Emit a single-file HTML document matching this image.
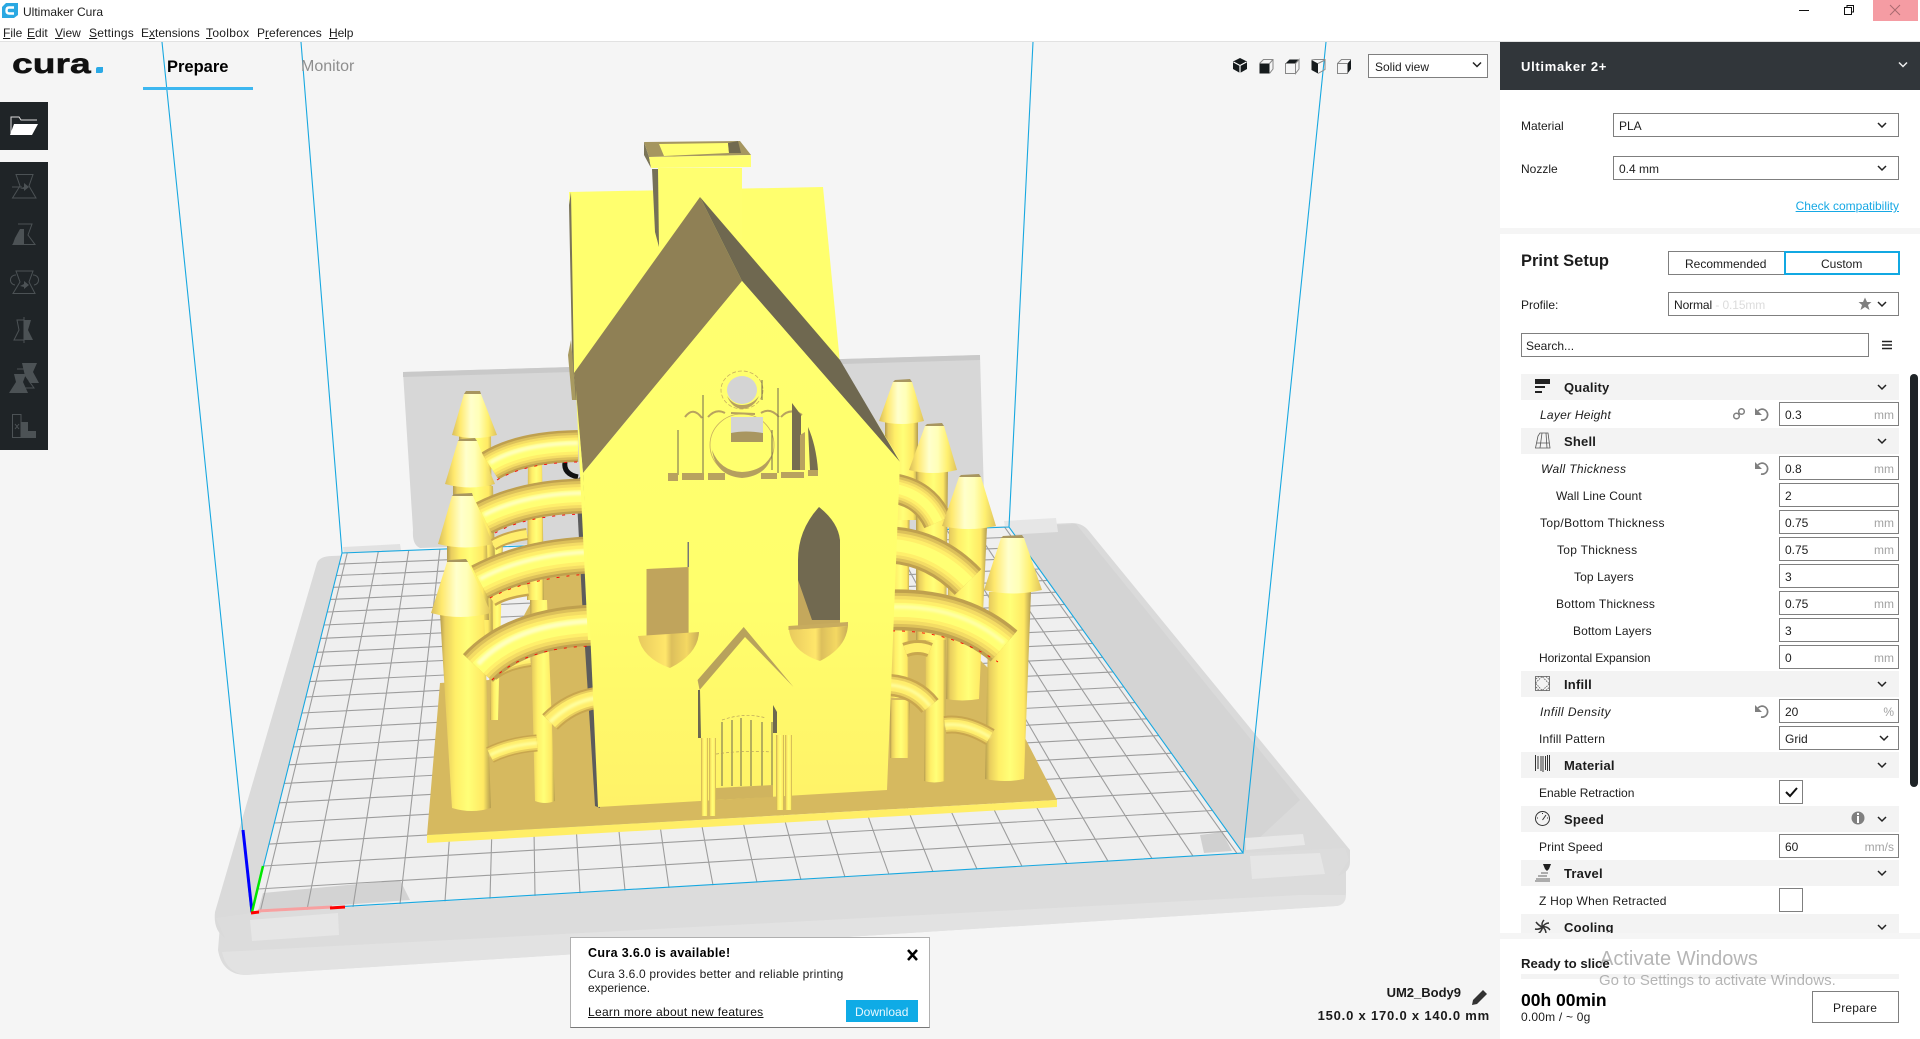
<!DOCTYPE html>
<html><head><meta charset="utf-8"><title>Ultimaker Cura</title>
<style>
html,body{margin:0;padding:0;width:1920px;height:1039px;overflow:hidden;background:#f5f5f5;font-family:"Liberation Sans",sans-serif;color:#1c1c1c;font-size:12px}
.t{position:absolute;white-space:nowrap;line-height:16px;margin-top:1px}
.b{font-weight:bold}
.c{letter-spacing:.2px}
.box{position:absolute;box-sizing:border-box;background:#fff;border:1px solid #7f7f7f}
.band{position:absolute;left:1521px;width:378px;height:26px;background:#f3f3f3}
.in{position:absolute;left:1779px;width:120px;height:24px;box-sizing:border-box;background:#fff;border:1px solid #7f7f7f}
.u{color:#a3a3a3}
svg{position:absolute;left:0;top:0}
</style></head><body>
<svg width="1920" height="1039" viewBox="0 0 1920 1039">
<defs>
<linearGradient id="body" x1="0" x2="1" y1="0" y2="0"><stop offset="0" stop-color="#b49c50"/><stop offset=".1" stop-color="#e8cd5e"/><stop offset=".3" stop-color="#ffef68"/><stop offset=".55" stop-color="#ffff78"/><stop offset=".85" stop-color="#ffe963"/><stop offset="1" stop-color="#b49c50"/></linearGradient>
<linearGradient id="cone" x1="0" x2="1" y1="0" y2="0"><stop offset="0" stop-color="#d9bd5a"/><stop offset=".18" stop-color="#ffe96e"/><stop offset=".42" stop-color="#ffffcc"/><stop offset=".6" stop-color="#ffffb8"/><stop offset=".8" stop-color="#fff070"/><stop offset="1" stop-color="#dfc25c"/></linearGradient>
<linearGradient id="front" x1="0" x2="0" y1="0" y2="1"><stop offset="0" stop-color="#ffff70"/><stop offset=".6" stop-color="#ffff6c"/><stop offset="1" stop-color="#fff268"/></linearGradient>
<linearGradient id="bowl" x1="0" x2="1" y1="0" y2="0"><stop offset="0" stop-color="#e8ca5e"/><stop offset=".45" stop-color="#ffe66a"/><stop offset=".55" stop-color="#dcbf5c"/><stop offset=".8" stop-color="#f4d862"/><stop offset="1" stop-color="#c8ac58"/></linearGradient>
<filter id="bl" x="-20%" y="-20%" width="140%" height="140%"><feGaussianBlur stdDeviation="1.2"/></filter>
<path id="a1" d="M490,466 Q520,447 578,446"/>
<path id="a2" d="M484,518 Q525,497 582,496"/>
<path id="a3" d="M480,582 Q525,558 588,555"/>
<path id="a4" d="M478,668 Q515,628 594,625"/>
<path id="b1" d="M892,488 Q925,493 938,522"/>
<path id="b2" d="M892,545 Q935,548 968,582"/>
<path id="b3" d="M890,610 Q960,608 1004,646"/>
<path id="b4" d="M890,685 Q915,687 930,706"/>
<path id="c1" d="M490,672 Q505,660 530,657"/>
<path id="c2" d="M490,755 Q510,745 537,743"/>
<path id="c3" d="M550,722 Q570,702 596,698"/>
<path id="c4" d="M945,725 Q965,722 990,737"/>
</defs>
<!-- back wall -->
<path d="M403,372 L980,355 L985,530 L420,548 Q412,545 413,530 Z" fill="#d7d7d7"/>
<path d="M403,372 L980,355 L980,360 L403,377 Z" fill="#c9c9c9"/>
<!-- plate -->
<path d="M220,925 L218,950 Q222,974 245,975 L1336,906 Q1346,905 1346,892 L1346,870 Z" fill="#dcdcdc"/>
<path d="M222,952 Q226,972 245,975 L1336,906 Q1346,905 1346,895 L1300,895 Z" fill="#e2e2e2"/>
<path d="M332,556 Q320,556 317,563 L215,912 Q213,930 225,938 L1338,876 Q1350,872 1350,862 L1350,850 L1088,530 Q1082,523 1072,523 Z" fill="#dadada"/>
<path d="M1009,527 L1076,524 L1300,800 L1243,853 Z" fill="#d4d4d4"/>
<path d="M252,913 L1243,853 L1345,848 L1349,860 L1338,876 L225,938 L216,918 Z" fill="#dcdcdc"/>
<path d="M343,547 L400,544 L402,556 L345,559 Z" fill="#e2e2e2"/>
<path d="M1004,521 L1056,518 L1058,532 L1006,535 Z" fill="#e6e6e6"/>
<path d="M1245,838 L1303,834 L1305,845 L1246,850 Z" fill="#e8e8e8"/>
<path d="M1250,856 L1320,853 L1325,874 L1252,879 Z" fill="#e6e6e6"/>
<path d="M250,920 L338,913 L339,935 L252,941 Z" fill="#e6e6e6"/>
<!-- floor -->
<path d="M252,913 L342,553 L1009,527 L1243,853 Z" fill="#efefef"/>
<path d="M263,893 L400,880 L410,900 L258,911 Z" fill="#d3d3d3"/>
<path d="M1200,835 L1222,832 L1232,851 L1204,853 Z" fill="#d0d0d0"/>
<path fill="none" stroke="#9d9d9d" stroke-width="1.1" d="M260,912.5L347.3,552.8M307,909.7L378.3,551.6M353,906.9L408.7,550.3M400,904L439.9,549.2M445,901.3L469.7,548M490,898.6L499.7,546.8M535,895.9L529.7,545.7M580,893.2L559.7,544.6M625,890.4L589.8,543.4M669,887.8L619.3,542.1M713,885.1L648.8,541M757,882.5L678.4,539.9M801,879.8L708,538.7M845,877.1L737.7,537.4M889,874.5L767.5,536.4M933,871.8L797.3,535.2M977,869.1L827.1,533.9M1022,866.4L857.8,532.9M1067,863.7L888.4,531.6M1108,861.2L916.3,530.6M1152,858.5L946.6,529.6M1193,856.1L974.6,528.4M1237,853.4L1004.7,527.2
M258,889L1227.4,831.3M263.7,866L1212.5,810.5M269.2,844.1L1198.2,790.6M274.5,823L1184.5,771.5M279.5,802.8L1171.4,753.2M284.4,783.4L1158.8,735.6M289.1,764.8L1146.6,718.8M293.5,746.9L1135,702.6M297.8,729.6L1123.8,687M302,713L1113,671.9M306,697L1102.6,657.4M309.9,681.6L1092.6,643.4M313.6,666.7L1082.9,630M317.2,652.3L1073.6,617M320.6,638.4L1064.5,604.4M324,625L1055.8,592.2M327.2,612L1047.4,580.4M330.4,599.4L1039.2,569M333.4,587.3L1031.3,558M336.4,575.5L1023.6,547.4M339.2,564.1L1016.2,537"/>
<!-- build volume -->
<path fill="none" stroke="#18a8e0" stroke-width="1.1" d="M162,42L251,912L1243,853L1009,527L342,553L252,912M301,42L342,553M1033,42L1009,527M1326,42L1243,853"/>
<path d="M252,912 L243,830" stroke="#0000ff" stroke-width="3" fill="none"/>
<path d="M252,912 L263,866" stroke="#00e800" stroke-width="2.5" fill="none"/>
<path d="M258,911 L332,907" stroke="#f7a0a0" stroke-width="3" fill="none"/>
<path d="M251,913 L259,912 M330,908 L345,907" stroke="#ff0000" stroke-width="3" fill="none"/>

<!-- model base -->
<path d="M427,835 L1057,800 L990,670 L945,625 L890,620 L590,570 L547,573 L489,680 L440,683 Z" fill="#d6b95f"/>
<path d="M427,835 L1057,800 L1057,807 L427,843 Z" fill="#ffee66"/>
<path d="M565,462 Q563,474 578,477" fill="none" stroke="#111" stroke-width="5"/>
<!-- dark side strip -->
<path d="M576,480 L590,470 L600,808 L595,806 L582,600 Z" fill="#5c5c5c"/>

<!-- poles -->
<path d="M927,540 L946,540 L945,781 Q934,784 924,781 Z" fill="url(#body)"/>
<path d="M889,470 L910,470 L908,698 L890,698 Z" fill="url(#body)"/>
<path d="M528,460 L542,460 L544,600 L527,600 Z" fill="url(#body)"/>
<path d="M530,600 L547,600 L555,801 Q545,805 535,801 Z" fill="url(#body)"/>
<path d="M493,540 L503,540 L498,720 L490,720 Z" fill="url(#body)"/>
<path d="M900,700 L910,700 L908,758 L890,758 L890,700 Z" fill="url(#body)"/>

<!-- tower bodies left -->
<path d="M459,436 L491,436 L493,650 L459,650 Z" fill="url(#body)"/>
<path d="M453,486 L493,486 L495,560 L453,560 Z" fill="url(#body)"/>
<path d="M447,545 L487,545 L489,620 L447,620 Z" fill="url(#body)"/>
<path d="M440,614 L484,614 L491,808 Q472,814 452,808 Z" fill="url(#body)"/>
<!-- tower bodies right -->
<path d="M885,422 L918,422 L918,520 L885,520 Z" fill="url(#body)"/>
<path d="M916,470 L948,470 L946,640 L916,640 Z" fill="url(#body)"/>
<path d="M949,527 L987,527 L979,699 Q962,702 946,699 Z" fill="url(#body)"/>
<path d="M989,592 L1031,592 L1024,779 Q1005,783 985,779 Z" fill="url(#body)"/>

<!-- arcs -->
<g fill="none">
<path d="M492,600 Q505,592 528,589" stroke="#c8a64e" stroke-width="14"/><path d="M492,600 Q505,592 528,589" stroke="#ffee6c" stroke-width="9"/>
<path d="M493,545 Q506,537 527,534" stroke="#c8a64e" stroke-width="12"/><path d="M493,545 Q506,537 527,534" stroke="#ffee6c" stroke-width="8"/>
<path d="M905,650 Q918,645 930,650" stroke="#c8a64e" stroke-width="15"/><path d="M905,650 Q918,645 930,650" stroke="#ffee6c" stroke-width="9"/>

<use href="#c1" stroke="#c8a64e" stroke-width="20"/><use href="#c1" stroke="#e8cd5e" stroke-width="16"/><use href="#c1" stroke="#ffee6c" stroke-width="12"/><use href="#c1" stroke="#ffffa0" stroke-width="4" filter="url(#bl)"/>
<use href="#c2" stroke="#c8a64e" stroke-width="17"/><use href="#c2" stroke="#e8cd5e" stroke-width="14"/><use href="#c2" stroke="#ffee6c" stroke-width="10"/><use href="#c2" stroke="#ffffa0" stroke-width="3" filter="url(#bl)"/>
<use href="#c3" stroke="#c8a64e" stroke-width="22"/><use href="#c3" stroke="#e8cd5e" stroke-width="18"/><use href="#c3" stroke="#ffee6c" stroke-width="14"/><use href="#c3" stroke="#ffffa0" stroke-width="4" filter="url(#bl)"/>
<use href="#c4" stroke="#c8a64e" stroke-width="18"/><use href="#c4" stroke="#e8cd5e" stroke-width="14"/><use href="#c4" stroke="#ffee6c" stroke-width="10"/><use href="#c4" stroke="#ffffa0" stroke-width="3" filter="url(#bl)"/>
<use href="#b4" stroke="#c8a64e" stroke-width="22"/><use href="#b4" stroke="#e8cd5e" stroke-width="17"/><use href="#b4" stroke="#ffee6c" stroke-width="12"/><use href="#b4" stroke="#ffffa0" stroke-width="3" filter="url(#bl)"/>

<use href="#a1" stroke="#bfa04e" stroke-width="32"/><use href="#a1" stroke="#dcc05a" stroke-width="27"/><use href="#a1" stroke="#f4dc64" stroke-width="22"/><use href="#a1" stroke="#ffef6a" stroke-width="17"/><use href="#a1" stroke="#ffff74" stroke-width="11"/><use href="#a1" y="-3" stroke="#ffffc0" stroke-width="4" filter="url(#bl)"/>
<use href="#a2" stroke="#bfa04e" stroke-width="35"/><use href="#a2" stroke="#dcc05a" stroke-width="30"/><use href="#a2" stroke="#f4dc64" stroke-width="24"/><use href="#a2" stroke="#ffef6a" stroke-width="18"/><use href="#a2" stroke="#ffff74" stroke-width="12"/><use href="#a2" y="-3" stroke="#ffffc0" stroke-width="4" filter="url(#bl)"/>
<use href="#a3" stroke="#bfa04e" stroke-width="37"/><use href="#a3" stroke="#dcc05a" stroke-width="32"/><use href="#a3" stroke="#f4dc64" stroke-width="26"/><use href="#a3" stroke="#ffef6a" stroke-width="20"/><use href="#a3" stroke="#ffff74" stroke-width="13"/><use href="#a3" y="-3" stroke="#ffffc0" stroke-width="4" filter="url(#bl)"/>
<use href="#a4" stroke="#bfa04e" stroke-width="41"/><use href="#a4" stroke="#dcc05a" stroke-width="35"/><use href="#a4" stroke="#f4dc64" stroke-width="29"/><use href="#a4" stroke="#ffef6a" stroke-width="22"/><use href="#a4" stroke="#ffff74" stroke-width="15"/><use href="#a4" y="-4" stroke="#ffffc0" stroke-width="5" filter="url(#bl)"/>
<path stroke="#ff0000" stroke-width=".9" stroke-dasharray="3 7" d="M497,480 Q525,463 577,462M495,533 Q525,516 582,514M490,598 Q525,579 588,574M492,680 Q525,647 594,646"/>

<use href="#b1" stroke="#bfa04e" stroke-width="30"/><use href="#b1" stroke="#dcc05a" stroke-width="25"/><use href="#b1" stroke="#f4dc64" stroke-width="20"/><use href="#b1" stroke="#ffef6a" stroke-width="15"/><use href="#b1" stroke="#ffff74" stroke-width="9"/>
<use href="#b2" stroke="#bfa04e" stroke-width="37"/><use href="#b2" stroke="#dcc05a" stroke-width="31"/><use href="#b2" stroke="#f4dc64" stroke-width="25"/><use href="#b2" stroke="#ffef6a" stroke-width="19"/><use href="#b2" stroke="#ffff74" stroke-width="12"/>
<use href="#b3" stroke="#bfa04e" stroke-width="41"/><use href="#b3" stroke="#dcc05a" stroke-width="34"/><use href="#b3" stroke="#f4dc64" stroke-width="28"/><use href="#b3" stroke="#ffef6a" stroke-width="21"/><use href="#b3" stroke="#ffff74" stroke-width="14"/><use href="#b3" y="-3" stroke="#ffffa8" stroke-width="4" filter="url(#bl)"/>
<path stroke="#ff0000" stroke-width=".9" stroke-dasharray="3 7" d="M892,631 Q950,630 998,662"/>
</g>

<!-- cones left -->
<path d="M464,394 L452,435 Q475,441 497,435 L481,394 Z" fill="url(#cone)"/><path d="M464,394 L481,394 L480,391 L466,391Z" fill="#a8965f"/>
<path d="M458,441 L445,484 Q470,491 495,484 L477,441 Z" fill="url(#cone)"/><path d="M458,441 L477,441 L475,438 L460,439Z" fill="#a8965f"/>
<path d="M452,496 L438,544 Q465,551 493,544 L473,496 Z" fill="url(#cone)"/><path d="M452,496 L473,496 L472,493 L454,494Z" fill="#a8965f"/>
<path d="M447,562 L431,613 Q460,621 491,613 L468,562 Z" fill="url(#cone)"/><path d="M447,562 L468,562 L466,559 L449,560Z" fill="#a8965f"/>
<!-- cones right -->
<path d="M893,382 L879,421 Q901,427 924,421 L912,382 Z" fill="url(#cone)"/><path d="M893,382 L912,382 L910,379 L895,380Z" fill="#a8965f"/>
<path d="M925,426 L909,470 Q932,476 957,470 L944,426 Z" fill="url(#cone)"/><path d="M925,426 L944,426 L942,423 L927,424Z" fill="#a8965f"/>
<path d="M959,477 L942,526 Q968,532 996,526 L981,477 Z" fill="url(#cone)"/><path d="M959,477 L981,477 L979,474 L961,475Z" fill="#a8965f"/>
<path d="M1001,538 L984,590 Q1012,597 1042,590 L1024,538 Z" fill="url(#cone)"/><path d="M1001,538 L1024,538 L1022,535 L1003,536Z" fill="#a8965f"/>

<!-- house -->
<path d="M569,192 L823,187 L840,363 L900,460 L574,380 Z" fill="#ffff6e"/>
<path d="M569,205 L571,192 L574,373 L577,400 L573,400 Z" fill="#7a7458"/>
<path d="M568,355 L571,340 L576,400 L572,400 Z" fill="#a89a60"/>
<!-- chimney -->
<path d="M658,168 L742,168 L742,250 L658,250 Z" fill="#ffff70"/>
<path d="M652,169 L658,169 L659,247 L655,232 Z" fill="#757058"/>
<path d="M644,142 L649,157 L651,168 L644,155 Z" fill="#7a7458"/>
<path d="M644,142 L740,141 L751,155 L649,157 Z" fill="#a59660"/>
<path d="M659,144 L728,143 L729,153 L664,156 Z" fill="#ffff70"/>
<path d="M728,143 L738,141 L741,153 L729,153 Z" fill="#726a50"/>
<path d="M649,157 L751,155 L751,167 L651,168 Z" fill="#ffff72"/>
<!-- roof -->
<path d="M700,197 L742,281 L583,473 L574,373 Z" fill="#8f8055"/>
<path d="M700,197 L742,281 L900,462 L840,360 Z" fill="#6f6850"/>
<path d="M576,390 L583,473 L592,640 L588,640 Z" fill="#ffff6e"/>
<!-- front -->
<path d="M583,473 L742,281 L900,462 L887,790 L598,807 Z" fill="url(#front)"/>

<!-- upper windows -->
<ellipse cx="742" cy="390" rx="21" ry="19" fill="none" stroke="#c8b060" stroke-width=".8" stroke-dasharray="4 2"/>
<ellipse cx="742" cy="390" rx="15" ry="14" fill="#d4d4d4"/>
<path d="M727,396 Q732,408 742,409 Q754,408 759,396 Q752,405 742,405 Q733,405 727,396Z" fill="#b8a25f"/>
<ellipse cx="742" cy="445" rx="32" ry="31" fill="none" stroke="#c8b060" stroke-width=".8"/>
<path d="M712,450 Q716,476 742,478 Q768,476 773,452 Q765,471 742,472 Q720,471 712,450Z" fill="#b59f5f"/>
<rect x="731" y="417" width="32" height="25" fill="#d4d4d4"/>
<path d="M731,433 Q745,430 763,433 L763,442 L731,442 Z" fill="#a99660"/>
<path fill="none" stroke="#b8a25f" stroke-width="2" d="M685,417 Q693,406 702,418M708,417 Q716,408 725,413M731,413 L755,414M761,413 Q770,407 779,417M781,417 Q790,407 802,415"/>
<path fill="none" stroke="#726a50" stroke-width="1" d="M703,395V473M678,430V475M778,388V473M762,380V400M772,430V470"/>
<path d="M792,403 L801,415 L801,470 L792,470Z" fill="#766c50"/>
<path d="M808,427 Q816,445 818,470 L810,470 Z" fill="#766c50"/>
<path d="M800,435 L805,432 L805,470 L800,470Z" fill="#b8a25f"/>
<path fill="#b8a25f" d="M668,473H678V481H668ZM682,473H704V480H682ZM708,473H725V480H708ZM761,473H777V479H761ZM781,472H804V478H781ZM808,470H818V476H808Z"/>

<!-- big windows -->
<path d="M819,507 Q798,530 798,560 L798,630 L840,630 L840,540 Q838,522 819,507Z" fill="#716950"/>
<path d="M798,580 L812,620 L840,620 L840,630 L798,630 Z" fill="#c4a85c"/>
<path d="M646.5,569 L688.6,567 L688.6,634 L646.5,636 Z" fill="#c0a45c"/>
<path d="M687.5,542 L689,542 L689,567 L687.5,567Z" fill="#777"/>
<!-- shields -->
<path d="M638,636 L699,632 Q698,654 670,668 Q642,658 638,636 Z" fill="url(#bowl)"/>
<path d="M789,630 L848,626 Q846,648 820,661 Q792,652 789,630 Z" fill="url(#bowl)"/>
<path d="M788.500,630 L848,626 L848,622 L788.500,626Z" fill="#c8ac5e"/>
<!-- door gable -->
<path d="M743.7,627 L793.5,687 L745,637 L699.6,690 L697.6,680 Z" fill="#b8a25c"/>
<path d="M698,690 L700,690 L701,738 L698,738 Z" fill="#6c6850"/>
<path d="M773,705 L777,712 L777,733 L773,733 Z" fill="#6c6850"/>
<path fill="none" stroke="#6c6850" stroke-width="1" d="M722,722V786M732,720V786M741,718V786M751,720V786M762,722V786M772,722V786"/>
<path fill="none" stroke="#b8a25c" stroke-width=".7" stroke-dasharray="3 2" d="M716,754 Q745,750 772,752M722,720 Q745,712 766,718"/>
<path d="M716,788 L773,785 L773,797 L716,800 Z" fill="#d0b45e"/>
<rect x="701" y="738" width="7" height="78" fill="url(#body)"/><rect x="709" y="738" width="7" height="78" fill="url(#body)"/>
<rect x="776" y="735" width="8" height="75" fill="url(#body)"/><rect x="785" y="735" width="7" height="75" fill="url(#body)"/>
</svg>

<!-- title bar -->
<div style="position:absolute;left:0;top:0;width:1920px;height:41px;background:#fff"></div>
<div style="position:absolute;left:0;top:41px;width:1920px;height:1px;background:#e2e2e2"></div>
<div class="t" style="left:23px;top:3px;font-size:12px">Ultimaker Cura</div>
<div class="t" style="left:3px;top:24px"><u>F</u>ile</div>
<div class="t" style="left:27px;top:24px"><u>E</u>dit</div>
<div class="t" style="left:55px;top:24px"><u>V</u>iew</div>
<div class="t" style="left:89px;top:24px;letter-spacing:.2px"><u>S</u>ettings</div>
<div class="t" style="left:141px;top:24px">E<u>x</u>tensions</div>
<div class="t" style="left:206px;top:24px;letter-spacing:.3px"><u>T</u>oolbox</div>
<div class="t" style="left:257px;top:24px">P<u>r</u>eferences</div>
<div class="t" style="left:329px;top:24px;letter-spacing:-.1px"><u>H</u>elp</div>
<div style="position:absolute;left:1873px;top:0;width:45px;height:21px;background:#f59ca3"></div>

<!-- header -->
<div class="t b" style="left:12px;top:47px;font-size:28px;line-height:32px;color:#111;transform:scaleX(1.33);transform-origin:left center;-webkit-text-stroke:.5px #111">cura</div>
<div style="position:absolute;left:96px;top:67px;width:7px;height:6px;background:#2aa9e6;border-radius:2px 0 2px 0"></div>
<div class="t b" style="left:167px;top:58px;font-size:16.5px;color:#000">Prepare</div>
<div style="position:absolute;left:143px;top:87px;width:110px;height:3px;background:#3db7f0"></div>
<div class="t" style="left:301px;top:58px;font-size:16px;color:#8e8e8e">Monitor</div>
<div style="position:absolute;left:0;top:102px;width:48px;height:48px;background:#1f2427"></div>
<div style="position:absolute;left:0;top:162px;width:48px;height:288px;background:#1f2427"></div>
<div class="box" style="left:1368px;top:54px;width:120px;height:24px"></div>
<div class="t" style="left:1375px;top:58px">Solid view</div>

<!-- sidebar -->
<div style="position:absolute;left:1500px;top:42px;width:420px;height:997px;background:#fff"></div>
<div style="position:absolute;left:1500px;top:42px;width:420px;height:48px;background:#31363a"></div>
<div class="t b" style="left:1521px;top:58px;font-size:13px;color:#fff;letter-spacing:.7px">Ultimaker 2+</div>
<div class="t" style="left:1521px;top:117px">Material</div>
<div class="box" style="left:1613px;top:113px;width:286px;height:24px"></div>
<div class="t" style="left:1619px;top:117px">PLA</div>
<div class="t" style="left:1521px;top:160px">Nozzle</div>
<div class="box" style="left:1613px;top:156px;width:286px;height:24px"></div>
<div class="t" style="left:1619px;top:160px">0.4 mm</div>
<div class="t" style="right:21px;top:197px;color:#16a8e4;text-decoration:underline">Check compatibility</div>
<div style="position:absolute;left:1500px;top:228px;width:420px;height:6px;background:#f5f5f5"></div>
<div class="t b" style="left:1521px;top:252px;font-size:16.5px">Print Setup</div>
<div class="box" style="left:1668px;top:251px;width:117px;height:24px"></div>
<div class="t" style="left:1685px;top:255px">Recommended</div>
<div class="box" style="left:1784px;top:251px;width:116px;height:24px;border:2px solid #11a8e2"></div>
<div class="t" style="left:1821px;top:255px">Custom</div>
<div class="t" style="left:1521px;top:296px">Profile:</div>
<div class="box" style="left:1668px;top:292px;width:231px;height:24px"></div>
<div class="t" style="left:1674px;top:296px;letter-spacing:-.1px">Normal <span style="color:#dcdcdc">- 0.15mm</span></div>
<div class="box" style="left:1521px;top:333px;width:348px;height:24px"></div>
<div class="t" style="left:1526px;top:337px">Search...</div>
<div style="position:absolute;left:1910px;top:374px;width:8px;height:413px;background:#1f2427;border-radius:4px"></div>

<!-- settings -->
<div class="band" style="top:374px"></div><div class="t b c" style="left:1564px;top:379px;font-size:13px">Quality</div>
<div class="t" style="left:1540px;top:406px;font-style:italic;letter-spacing:.25px">Layer Height</div>
<div class="in" style="top:402px"></div><div class="t" style="left:1785px;top:406px">0.3</div><div class="t u" style="right:26px;top:406px">mm</div>
<div class="band" style="top:428px"></div><div class="t b c" style="left:1564px;top:433px;font-size:13px">Shell</div>
<div class="t" style="left:1541px;top:460px;font-style:italic;letter-spacing:.35px">Wall Thickness</div>
<div class="in" style="top:456px"></div><div class="t" style="left:1785px;top:460px">0.8</div><div class="t u" style="right:26px;top:460px">mm</div>
<div class="t" style="left:1556px;top:487px;letter-spacing:.1px">Wall Line Count</div>
<div class="in" style="top:483px"></div><div class="t" style="left:1785px;top:487px">2</div>
<div class="t" style="left:1540px;top:514px;letter-spacing:.35px">Top/Bottom Thickness</div>
<div class="in" style="top:510px"></div><div class="t" style="left:1785px;top:514px">0.75</div><div class="t u" style="right:26px;top:514px">mm</div>
<div class="t" style="left:1557px;top:541px;letter-spacing:.3px">Top Thickness</div>
<div class="in" style="top:537px"></div><div class="t" style="left:1785px;top:541px">0.75</div><div class="t u" style="right:26px;top:541px">mm</div>
<div class="t" style="left:1574px;top:568px;letter-spacing:.1px">Top Layers</div>
<div class="in" style="top:564px"></div><div class="t" style="left:1785px;top:568px">3</div>
<div class="t" style="left:1556px;top:595px;letter-spacing:.25px">Bottom Thickness</div>
<div class="in" style="top:591px"></div><div class="t" style="left:1785px;top:595px">0.75</div><div class="t u" style="right:26px;top:595px">mm</div>
<div class="t" style="left:1573px;top:622px;letter-spacing:.1px">Bottom Layers</div>
<div class="in" style="top:618px"></div><div class="t" style="left:1785px;top:622px">3</div>
<div class="t" style="left:1539px;top:649px;letter-spacing:-.1px">Horizontal Expansion</div>
<div class="in" style="top:645px"></div><div class="t" style="left:1785px;top:649px">0</div><div class="t u" style="right:26px;top:649px">mm</div>
<div class="band" style="top:671px"></div><div class="t b c" style="left:1564px;top:676px;font-size:13px">Infill</div>
<div class="t" style="left:1540px;top:703px;font-style:italic;letter-spacing:.45px">Infill Density</div>
<div class="in" style="top:699px"></div><div class="t" style="left:1785px;top:703px">20</div><div class="t u" style="right:26px;top:703px">%</div>
<div class="t" style="left:1539px;top:730px;letter-spacing:.2px">Infill Pattern</div>
<div class="in" style="top:726px"></div><div class="t" style="left:1785px;top:730px">Grid</div>
<div class="band" style="top:752px"></div><div class="t b c" style="left:1564px;top:757px;font-size:13px">Material</div>
<div class="t" style="left:1539px;top:784px">Enable Retraction</div>
<div class="in" style="top:780px;width:24px"></div>
<div class="band" style="top:806px"></div><div class="t b c" style="left:1564px;top:811px;font-size:13px">Speed</div>
<div class="t" style="left:1539px;top:838px;letter-spacing:.1px">Print Speed</div>
<div class="in" style="top:834px"></div><div class="t" style="left:1785px;top:838px">60</div><div class="t u" style="right:26px;top:838px">mm/s</div>
<div class="band" style="top:860px"></div><div class="t b c" style="left:1564px;top:865px;font-size:13px">Travel</div>
<div class="t" style="left:1539px;top:892px;letter-spacing:.25px">Z Hop When Retracted</div>
<div class="in" style="top:888px;width:24px"></div>
<div class="band" style="top:914px"></div><div class="t b c" style="left:1564px;top:919px;font-size:13px">Cooling</div>

<!-- icons layer -->
<svg width="1920" height="1039" viewBox="0 0 1920 1039">
<!-- app icon -->
<path d="M2,7 L6,3 H18 V15 L14,18 H2 Z" fill="#2aa8e2"/>
<path d="M14,7.5 H9 Q6.5,7.5 6.5,10.5 Q6.5,13.5 9,13.5 H14" fill="none" stroke="#fff" stroke-width="2.4"/>
<!-- window buttons -->
<path d="M1799,10.5H1809" stroke="#111" stroke-width="1"/>
<path d="M1844.5,7.5H1851.5V14.5H1844.5ZM1847,7.5V5.5H1853.5V12H1851.5" fill="none" stroke="#111" stroke-width="1"/>
<path d="M1890,5L1900,15M1900,5L1890,15" stroke="#a96a70" stroke-width="1" fill="none"/>
<!-- open -->
<path d="M11,135 V117 H19 L21,120 H37" fill="none" stroke="#ddd" stroke-width="1"/>
<path d="M14,124 H38 L32,135 H10 Z" fill="#fff"/>
<!-- tools -->
<g fill="none" stroke="#4c5255" stroke-width="1">
<path d="M16,174.5H33L29,186L36,198H12.5L20,186Z"/><path d="M12,187H22"/>
<path d="M18,224H32L28,235L35,244.5H13L22,233"/>
<path d="M16,271H33L29,282L35,293.5H13L20,282Z"/><path d="M16,275a5,5 0 1,0 -1,10M33,275a5,5 0 1,1 1,10"/>
<path d="M24,317V343"/><path d="M17,320H24V340H14L19,330Z"/>
<path d="M17,369H31L29,381L34,388H19"/>
<path d="M12.5,414.5H21V437.5H12.5Z"/>
</g>
<g fill="#4c5255">
<path d="M20,229H24V245H12.5L15,238Z"/><path d="M20,188.500L24,187V183L29,187L24,191V189Z"/><path d="M20,286L24,284V281L29,285L24,289V287Z"/>
<path d="M24,320H31L28,330L33,340H24Z"/>
<path d="M22,363H37L33,372L39,383H30L25,376Z"/><path d="M14,374H26L23,382L28,393H9L16,382Z"/>
<path d="M21,422H28V431H36V438H21Z"/>
</g>
<path d="M15,424l4,5m0,-5l-4,5" stroke="#4c5255" stroke-width="1"/>
<!-- view cubes -->
<path d="M1240,58L1247,61.500V69L1240,73L1233,69V61.500Z" fill="#151a1c"/><path d="M1233.500,62L1240,65.500L1246.500,62M1240,65.500V73" stroke="#fff" stroke-width="1.2" fill="none"/>
<g transform="translate(1259,59)"><path d="M0.500,4.500H10.500V14.500H0.500Z" fill="#161b1d"/><path d="M0.500,4.500L4.500,.5H14V10L10.500,14.500" fill="none" stroke="#888"/><path d="M10.500,4.500L14,.5" stroke="#888"/></g>
<g transform="translate(1285,59)"><path d="M0.500,4.500L4.500,.5H14L10.500,4.500Z" fill="#161b1d"/><path d="M10.500,4.500L14,.5V10L10.500,14.500ZM0.500,4.500H10.500V14.500H0.500Z" fill="none" stroke="#888"/></g>
<g transform="translate(1311,59)"><path d="M0.500,1L7,4.500V14.500L.5,11Z" fill="#161b1d"/><path d="M0.500,1L4,.5H14V10.500L7,14.500M7,4.500L14,1" fill="none" stroke="#888"/></g>
<g transform="translate(1337,59)"><path d="M10.500,4.500L14,.5V10L10.500,14.500Z" fill="#161b1d"/><path d="M0.500,4.500H10.500V14.500H0.500ZM0.500,4.500L4.500,.5H14" fill="none" stroke="#888"/></g>
<!-- chevrons -->
<path d="M1473,62.500L1477,66.500L1481,62.500" fill="none" stroke="#222" stroke-width="1.500"/>
<path d="M1899,62.500L1903,66.500L1907,62.500" fill="none" stroke="#eee" stroke-width="1.500"/>
<g fill="none" stroke="#222" stroke-width="1.500">
<path d="M1878,123L1882,127L1886,123M1878,166L1882,170L1886,166M1878,302L1882,306L1886,302M1878,385L1882,389L1886,385M1878,439L1882,443L1886,439M1878,682L1882,686L1886,682M1880,736L1884,740L1888,736M1878,763L1882,767L1886,763M1878,817L1882,821L1886,817M1878,871L1882,875L1886,871M1878,925L1882,929L1886,925"/>
</g>
<!-- star -->
<path d="M1865,297.500L1867,302H1871.500L1868,305L1869.500,310L1865,307L1860.500,310L1862,305L1858.500,302H1863Z" fill="#7f7f7f"/>
<!-- hamburger -->
<path d="M1882,341.500H1892M1882,345H1892M1882,348.500H1892" stroke="#222" stroke-width="1.500"/>
<!-- category icons -->
<path d="M1535,379H1550V384H1535ZM1535,386H1545V388H1535ZM1535,391H1542V393H1535Z" fill="#222"/>
<path d="M1540,433H1548L1550,448H1535.500L1538,436ZM1542,433L1540,448M1546,433L1547,448M1537,443H1549" fill="none" stroke="#555" stroke-width=".8"/>
<g fill="none" stroke="#555" stroke-width=".8"><path d="M1535.500,676.500H1549.500V690.500H1535.500Z"/><path d="M1535.500,683L1542,676.500L1549.500,684L1542,690.500ZM1536,679L1539,676.500M1546,676.500L1549.500,680M1536,687L1539,690.500M1546,690.500L1549.500,687" stroke-dasharray="1.500 1"/></g>
<path d="M1535.500,755V771M1538,756V769M1541,756V771M1543,756V772M1545.500,756V770M1547.500,755V771M1549.500,755V771" stroke="#333" stroke-width="1" fill="none"/>
<circle cx="1542.500" cy="818.500" r="7" fill="none" stroke="#333" stroke-width="1"/><path d="M1542.500,820L1546,815M1539,813.500V813.500M1537,818H1538M1547,818H1548M1542.500,813V814" stroke="#333" stroke-width="1"/>
<path d="M1543,864H1551L1549,869L1547,871L1545,869Z" fill="#222"/><path d="M1541,873H1548M1538,876H1547M1536,879H1550M1535,881H1550" stroke="#666" stroke-width="1" fill="none"/>
<g stroke="#333" stroke-width="1.500" fill="none"><path d="M1542.500,927Q1541,923 1544,920M1542.500,927Q1545,923 1549,923M1542.500,927Q1547,926 1550,930M1542.500,927Q1546,929 1546,934M1542.500,927Q1542,931 1538,934M1542.500,927Q1539,930 1535,929M1542.500,927Q1539,926 1536,922"/></g>
<!-- reset + link -->
<g fill="none" stroke="#7f7f7f" stroke-width="1.700"><path d="M1758,411A5.500,5.500 0 1,1 1761,420"/><path d="M1758,465A5.500,5.500 0 1,1 1761,474"/><path d="M1758,708A5.500,5.500 0 1,1 1761,717"/></g>
<path fill="#7f7f7f" d="M1755,408V415H1762ZM1755,462V469H1762ZM1755,705V712H1762Z"/>
<g fill="none" stroke="#7f7f7f" stroke-width="1.500"><circle cx="1736.500" cy="416" r="2.800"/><circle cx="1741.500" cy="411.500" r="2.800"/><path d="M1738,414.500L1740,413"/></g>
<circle cx="1858" cy="818" r="6.500" fill="#7f7f7f"/><path d="M1858,816V823M1858,813V815" stroke="#fff" stroke-width="2"/>
<path d="M1786,792L1790,796L1797,788" fill="none" stroke="#111" stroke-width="2"/>
</svg>

<!-- footer of sidebar -->
<div style="position:absolute;left:1500px;top:933px;width:420px;height:106px;background:#fff"></div>
<div style="position:absolute;left:1500px;top:933px;width:420px;height:6px;background:#f5f5f5"></div>
<div class="t b" style="left:1521px;top:955px;font-size:13.2px">Ready to slice</div>
<div style="position:absolute;left:1521px;top:974px;width:378px;height:5px;background:#f3f3f3"></div>
<div class="t b" style="left:1521px;top:989px;font-size:17.5px;line-height:20px;color:#000">00h 00min</div>
<div class="t" style="left:1521px;top:1008px;letter-spacing:.2px">0.00m / ~ 0g</div>
<div class="box" style="left:1812px;top:991px;width:87px;height:32px"></div>
<div class="t" style="left:1833px;top:999px;letter-spacing:.2px">Prepare</div>

<!-- popup -->
<div style="position:absolute;left:570px;top:937px;width:360px;height:91px;box-sizing:border-box;background:#fff;border:1px solid #b0b0b0;border-bottom:1px solid #777"></div>
<div class="t b" style="left:588px;top:944px;font-size:12.500px;color:#000;letter-spacing:.35px">Cura 3.6.0 is available!</div>
<div class="t" style="left:588px;top:965px;letter-spacing:.18px">Cura 3.6.0 provides better and reliable printing</div>
<div class="t" style="left:588px;top:979px">experience.</div>
<div class="t" style="left:588px;top:1003px;text-decoration:underline;color:#111;letter-spacing:.3px">Learn more about new features</div>
<div style="position:absolute;left:846px;top:1000px;width:72px;height:22px;background:#0fabe6"></div>
<div class="t" style="left:855px;top:1003px;color:#e8f8ff">Download</div>
<svg width="1920" height="1039" viewBox="0 0 1920 1039"><path d="M908,950L917,960M917,950L908,960" stroke="#000" stroke-width="2.500" fill="none"/>
<path d="M1473,1000L1483,990L1487,994L1477,1004L1472,1005Z" fill="#333"/></svg>

<!-- bottom right labels -->
<div class="t b" style="right:459px;top:984px;font-size:13px;color:#1a1a1a">UM2_Body9</div>
<div class="t b" style="right:430px;top:1007px;font-size:13px;letter-spacing:.8px;color:#1a1a1a">150.0 x 170.0 x 140.0 mm</div>

<!-- activate windows -->
<div class="t" style="left:1600px;top:946px;font-size:20px;line-height:24px;color:rgba(120,120,120,.55)">Activate Windows</div>
<div class="t" style="left:1599px;top:972px;font-size:15px;color:rgba(120,120,120,.55)">Go to Settings to activate Windows.</div>
</body></html>
